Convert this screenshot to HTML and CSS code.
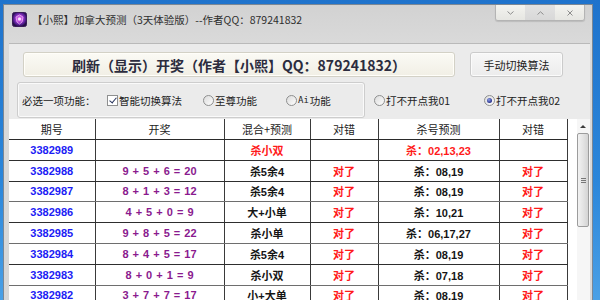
FILE: index.html
```html
<!DOCTYPE html>
<html lang="zh-CN">
<head>
    <meta charset="UTF-8">
    <title>【小熙】加拿大预测</title>
    <link rel="stylesheet" href="styles.css">
</head>
<body>
    <div class="window">
        <div class="titlebar">
            <svg class="app-icon" width="15" height="15" viewBox="0 0 15 15">
                <defs>
                    <radialGradient id="glow" cx="50%" cy="45%" r="55%">
                        <stop offset="0" stop-color="#f7b3ff"/>
                        <stop offset="0.35" stop-color="#c04be0"/>
                        <stop offset="0.75" stop-color="#5a1f9a"/>
                        <stop offset="1" stop-color="#241046"/>
                    </radialGradient>
                </defs>
                <rect x="0.5" y="0.5" width="14" height="14" rx="2" fill="url(#glow)" stroke="#3a1a5a"/>
                <path d="M4 5 L7.5 3 L11 5 L10 10 L7.5 12 L5 10 Z" fill="none" stroke="#ffd6ff" stroke-width="0.8" opacity="0.8"/>
                <circle cx="7.5" cy="7" r="1.6" fill="#fff2ff" opacity="0.85"/>
            </svg>
            <span class="title">【小熙】加拿大预测（3天体验版）--作者QQ：879241832</span>
            <div class="caption-btns">
                <span class="cap-btn">
                    <svg width="9" height="6" viewBox="0 0 9 6"><path d="M1.5 1.5 L4.5 4.2 L7.5 1.5" fill="none" stroke="#8c8c8c" stroke-width="1"/></svg>
                </span>
                <span class="cap-btn max">
                    <svg width="9" height="6" viewBox="0 0 9 6"><path d="M1.5 4.5 L4.5 1.8 L7.5 4.5" fill="none" stroke="#8c8c8c" stroke-width="1"/></svg>
                </span>
                <span class="cap-btn">
                    <svg width="8" height="8" viewBox="0 0 8 8"><path d="M1.5 1.5 L6.5 6.5 M6.5 1.5 L1.5 6.5" stroke="#8c8c8c" stroke-width="1"/></svg>
                </span>
            </div>
        </div>

        <div class="client">
            <div class="toolbar">
                <button class="btn btn-refresh">刷新（显示）开奖（作者【小熙】QQ：879241832）</button>
                <button class="btn btn-switch">手动切换算法</button>
            </div>

            <div class="options">
                <div class="group">
                    <span class="group-label">必选一项功能：</span>
                    <label class="opt opt-smart"><span class="check checked"></span>智能切换算法</label>
                    <label class="opt opt-top"><span class="radio"></span>至尊功能</label>
                    <label class="opt"><span class="radio"></span><span class="ai">Ai</span>功能</label>
                </div>
                <label class="opt opt-01"><span class="radio"></span>打不开点我01</label>
                <label class="opt"><span class="radio on"></span>打不开点我02</label>
            </div>

            <div class="grid-wrap">
                <table class="grid">
                    <colgroup>
                        <col style="width: 86px">
                        <col style="width: 129px">
                        <col style="width: 86px">
                        <col style="width: 68px">
                        <col style="width: 121px">
                        <col style="width: 68px">
                    </colgroup>
                    <thead>
                        <tr>
                            <th>期号</th>
                            <th>开奖</th>
                            <th>混合+预测</th>
                            <th>对错</th>
                            <th>杀号预测</th>
                            <th>对错</th>
                        </tr>
                    </thead>
                    <tbody>
                        <tr>
                            <td class="no">3382989</td>
                            <td class="draw"></td>
                            <td class="red">杀小双</td>
                            <td></td>
                            <td class="red">杀：02,13,23</td>
                            <td></td>
                        </tr>
                        <tr>
                            <td class="no">3382988</td>
                            <td class="draw">9 + 5 + 6 = 20</td>
                            <td>杀5余4</td>
                            <td class="red">对了</td>
                            <td>杀：08,19</td>
                            <td class="red">对了</td>
                        </tr>
                        <tr class="light">
                            <td class="no">3382987</td>
                            <td class="draw">8 + 1 + 3 = 12</td>
                            <td>杀5余4</td>
                            <td class="red">对了</td>
                            <td>杀：08,19</td>
                            <td class="red">对了</td>
                        </tr>
                        <tr>
                            <td class="no">3382986</td>
                            <td class="draw">4 + 5 + 0 = 9</td>
                            <td>大+小单</td>
                            <td class="red">对了</td>
                            <td>杀：10,21</td>
                            <td class="red">对了</td>
                        </tr>
                        <tr class="light">
                            <td class="no">3382985</td>
                            <td class="draw">9 + 8 + 5 = 22</td>
                            <td>杀小单</td>
                            <td class="red">对了</td>
                            <td>杀：06,17,27</td>
                            <td class="red">对了</td>
                        </tr>
                        <tr>
                            <td class="no">3382984</td>
                            <td class="draw">8 + 4 + 5 = 17</td>
                            <td>杀5余4</td>
                            <td class="red">对了</td>
                            <td>杀：08,19</td>
                            <td class="red">对了</td>
                        </tr>
                        <tr class="light">
                            <td class="no">3382983</td>
                            <td class="draw">8 + 0 + 1 = 9</td>
                            <td>杀小双</td>
                            <td class="red">对了</td>
                            <td>杀：07,18</td>
                            <td class="red">对了</td>
                        </tr>
                        <tr>
                            <td class="no">3382982</td>
                            <td class="draw">3 + 7 + 7 = 17</td>
                            <td>小+大单</td>
                            <td class="red">对了</td>
                            <td>杀：08,19</td>
                            <td class="red">对了</td>
                        </tr>
                    </tbody>
                </table>

                <div class="vscroll">
                    <span class="arrow-up"></span>
                    <div class="thumb">
                        <span class="grip"></span>
                    </div>
                </div>
            </div>
        </div>
    </div>
</body>
</html>
```

FILE: styles.css
```css
body {
    margin: 0;
    height: 300px;
    overflow: hidden;
    padding: 4px 0 0 3px;
    box-sizing: border-box;
    background: linear-gradient(180deg, #1f73cc 0%, #2b86da 60%, #4aa0e6 100%);
    font-family: "Noto Sans CJK SC", "Noto Sans", sans-serif;
    color: #222;
}

.window {
    width: 590px;
    height: 320px;
    box-sizing: border-box;
    border: 1px solid #7b8794;
    border-bottom: none;
    padding: 0 2px 0 5px;
    background: linear-gradient(180deg, #d2d2d2 0px, #dadada 40px, #d6d6d6 100%);
}

/* title bar */
.titlebar {
    display: flex;
    align-items: flex-start;
    height: 38px;
}

.app-icon {
    margin: 7px 0 0 3px;
    flex: none;
}

.title {
    margin: 7px 0 0 5px;
    font-size: 10.5px;
    line-height: 16px;
    color: #2e2e2e;
    white-space: nowrap;
}

.caption-btns {
    display: flex;
    margin-left: auto;
    margin-right: 5px;
    border: 1px solid #b4b4b4;
    border-top: none;
    border-radius: 0 0 3px 3px;
    box-shadow: 0 1px 1px rgba(0, 0, 0, 0.12);
    overflow: hidden;
}

.cap-btn {
    display: flex;
    align-items: center;
    justify-content: center;
    width: 29px;
    height: 15px;
    background: linear-gradient(180deg, #f3f3ef, #e6e6e2);
}

.cap-btn.max {
    width: 30px;
    background: linear-gradient(180deg, #e2e2e2, #d8d8d8);
}

/* client area */
.client {
    height: 100%;
    border-top: 1px solid #b9b9b9;
    background-color: #ebebeb;
}

.toolbar {
    display: flex;
    align-items: center;
    padding: 8px 0 0 14px;
}

.btn {
    height: 25px;
    box-sizing: border-box;
    border-radius: 3px;
    font-family: "Noto Sans CJK SC", "Noto Sans", sans-serif;
    padding: 0;
    white-space: nowrap;
}

.btn-refresh {
    width: 432px;
    border: 1px solid #d3d1c6;
    background: linear-gradient(180deg, #fbfaf5, #f1efe5);
    box-shadow: inset 0 0 0 1px #fffef9;
    font-size: 14px;
    font-weight: bold;
    color: #2c2c3e;
}

.btn-switch {
    width: 93px;
    margin-left: 15px;
    border: 1px solid #cbcbcb;
    background: linear-gradient(180deg, #f7f7f7, #ececec);
    box-shadow: inset 0 0 0 1px #fbfbfb;
    font-size: 11px;
    color: #222;
}

.options {
    display: flex;
    align-items: center;
    margin-top: 5px;
    padding-left: 8px;
    font-size: 10.5px;
    color: #222;
}

.group {
    display: flex;
    align-items: center;
    width: 348px;
    height: 36px;
    box-sizing: border-box;
    padding-left: 4px;
    border: 1px solid #cdcdcd;
    border-radius: 3px;
    box-shadow: inset 0 0 0 1px #fafafa;
}

.group-label {
    width: 85px;
    white-space: nowrap;
}

.opt {
    display: flex;
    align-items: center;
    white-space: nowrap;
}

.opt-smart {
    width: 96px;
}

.opt-top {
    width: 83px;
}

.opt-01 {
    margin-left: 9px;
    width: 110px;
}

.ai {
    font-family: "DejaVu Sans Mono", monospace;
    font-size: 9px;
    margin-right: 1px;
}

.check,
.radio {
    width: 11px;
    height: 11px;
    box-sizing: border-box;
    margin-right: 1px;
    border: 1px solid #8e8f8f;
    background: linear-gradient(135deg, #dcdcdc, #fdfdfd);
    flex: none;
}

.check {
    position: relative;
    background: #fff;
}

.check.checked::after {
    content: "";
    position: absolute;
    left: 3px;
    top: 0px;
    width: 3px;
    height: 6px;
    border: solid #27335c;
    border-width: 0 1.5px 1.5px 0;
    transform: rotate(40deg);
}

.radio {
    border-radius: 50%;
    position: relative;
}

.radio.on::after {
    content: "";
    position: absolute;
    left: 2px;
    top: 2px;
    width: 5px;
    height: 5px;
    border-radius: 50%;
    background: radial-gradient(circle at 40% 35%, #8fa0e8, #27308c 70%);
}

/* data grid */
.grid-wrap {
    display: flex;
    margin-top: 1px;
    background-color: #fff;
}

.grid {
    width: 558px;
    table-layout: fixed;
    border-collapse: collapse;
    font-family: "Liberation Sans", "Noto Sans CJK SC", sans-serif;
    font-size: 11px;
    text-align: center;
}

.grid th {
    height: 20px;
    padding: 0;
    font-family: "Noto Sans CJK SC", sans-serif;
    font-weight: normal;
    color: #222;
    border-left: 1px solid #3a3a3a;
    border-bottom: 1px solid #2a2a2a;
}

.grid td {
    height: 19.8px;
    padding: 0;
    font-weight: bold;
    color: #151515;
    border-left: 1px solid #3a3a3a;
    border-bottom: 1px solid #2e2e2e;
    white-space: nowrap;
}

.grid tr.light td {
    border-bottom-color: #6e6e6e;
}

.grid th:first-child,
.grid td:first-child {
    border-left: none;
}

.grid th:last-child,
.grid td:last-child {
    border-right: 1px solid #3a3a3a;
}

.grid td.no {
    color: #1c1cf5;
}

.grid td.draw {
    color: #8a1a8e;
    word-spacing: 1px;
}

.grid td.red {
    color: #ff1a1a;
}

.vscroll {
    width: 14px;
    margin-left: 9px;
    background-color: #f6f6f6;
    display: flex;
    flex-direction: column;
    align-items: center;
}

.arrow-up {
    margin-top: 6px;
    width: 0;
    height: 0;
    border-left: 3px solid transparent;
    border-right: 3px solid transparent;
    border-bottom: 3px solid #3c3c3c;
}

.thumb {
    width: 12px;
    height: 94px;
    margin-top: 5px;
    box-sizing: border-box;
    border: 1px solid #9c9c9c;
    border-radius: 2px;
    background: linear-gradient(90deg, #f2f2f2, #e4e4e4 50%, #d4d4d4);
    display: flex;
    align-items: center;
    justify-content: center;
}

.grip {
    width: 5px;
    height: 5px;
    background: repeating-linear-gradient(180deg, #777 0px, #777 1px, transparent 1px, transparent 2px);
}
```
